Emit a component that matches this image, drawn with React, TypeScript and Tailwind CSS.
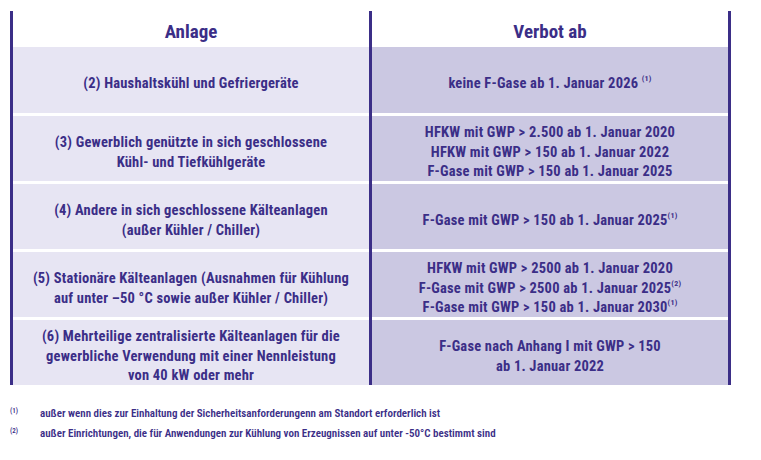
const font = { fontFamily: 'Roboto, "Liberation Sans", sans-serif', fontStretch: "75%" };

type Row = { left: React.ReactNode[]; right: React.ReactNode[] };

function Sup({ n }: { n: string }) {
  return <sup className="relative -top-[1px] align-super text-[8px]">({n})</sup>;
}

const rows: Row[] = [
  {
    left: ["(2) Haushaltskühl und Gefriergeräte"],
    right: [
      <>
        keine F-Gase ab 1. Januar 2026 <Sup n="1" />
      </>,
    ],
  },
  {
    left: ["(3) Gewerblich genützte in sich geschlossene", "Kühl- und Tiefkühlgeräte"],
    right: [
      "HFKW mit GWP > 2.500 ab 1. Januar 2020",
      "HFKW mit GWP > 150 ab 1. Januar 2022",
      "F-Gase mit GWP > 150 ab 1. Januar 2025",
    ],
  },
  {
    left: ["(4) Andere in sich geschlossene Kälteanlagen", "(außer Kühler / Chiller)"],
    right: [
      <>
        F-Gase mit GWP &gt; 150 ab 1. Januar 2025
        <Sup n="1" />
      </>,
    ],
  },
  {
    left: ["(5) Stationäre Kälteanlagen (Ausnahmen für Kühlung", "auf unter –50 °C sowie außer Kühler / Chiller)"],
    right: [
      "HFKW mit GWP > 2500 ab 1. Januar 2020",
      <>
        F-Gase mit GWP &gt; 2500 ab 1. Januar 2025
        <Sup n="2" />
      </>,
      <>
        F-Gase mit GWP &gt; 150 ab 1. Januar 2030
        <Sup n="1" />
      </>,
    ],
  },
  {
    left: [
      "(6) Mehrteilige zentralisierte Kälteanlagen für die",
      "gewerbliche Verwendung mit einer Nennleistung",
      "von 40 kW oder mehr",
    ],
    right: ["F-Gase nach Anhang I mit GWP > 150", "ab 1. Januar 2022"],
  },
];

function Cell({ lines, className }: { lines: React.ReactNode[]; className: string }) {
  return (
    <div
      className={`flex flex-col items-center justify-center pt-[8px] text-center text-[14.5px] leading-[19.5px] font-bold tracking-[0.2px] ${className}`}
    >
      {lines.map((l, i) => (
        <div key={i}>{l}</div>
      ))}
    </div>
  );
}

export default function App() {
  return (
    <div className="w-[761px] h-[460px] bg-white pl-[10px] pt-[11px] text-[#3b2e87]" style={font}>
      <div className="grid w-[721px] grid-cols-[356px_3px_356px] grid-rows-[36px_66px_68px_68px_68px_68px] border-x-[3px] border-[#3b2e87]">
        <div className="col-start-2 row-start-1 row-span-6 bg-[#3b2e87]" />
        <div className="col-start-1 row-start-1 flex items-center justify-center pt-[7px] text-[19px] font-bold">
          Anlage
        </div>
        <div className="col-start-3 row-start-1 flex items-center justify-center pt-[7px] text-[19px] font-bold">
          Verbot ab
        </div>
        {rows.map((r, i) => (
          <div key={i} className="contents">
            <Cell
              lines={r.left}
              className={`col-start-1 bg-[#e7e5f3] ${i > 0 ? "border-t-[3px] border-white" : ""}`}
            />
            <Cell
              lines={r.right}
              className={`col-start-3 bg-[#cbc8e2] ${i > 0 ? "border-t-[3px] border-white" : ""}`}
            />
          </div>
        ))}
      </div>
      <div className="mt-[19px] flex flex-col text-[11px] font-semibold leading-[19.5px]">
        <div className="flex">
          <span className="w-[30px] text-[7px] leading-[15px]">(1)</span>
          <span>außer wenn dies zur Einhaltung der Sicherheitsanforderungenn am Standort erforderlich ist</span>
        </div>
        <div className="flex">
          <span className="w-[30px] text-[7px] leading-[15px]">(2)</span>
          <span>außer Einrichtungen, die für Anwendungen zur Kühlung von Erzeugnissen auf unter -50°C bestimmt sind</span>
        </div>
      </div>
    </div>
  );
}
